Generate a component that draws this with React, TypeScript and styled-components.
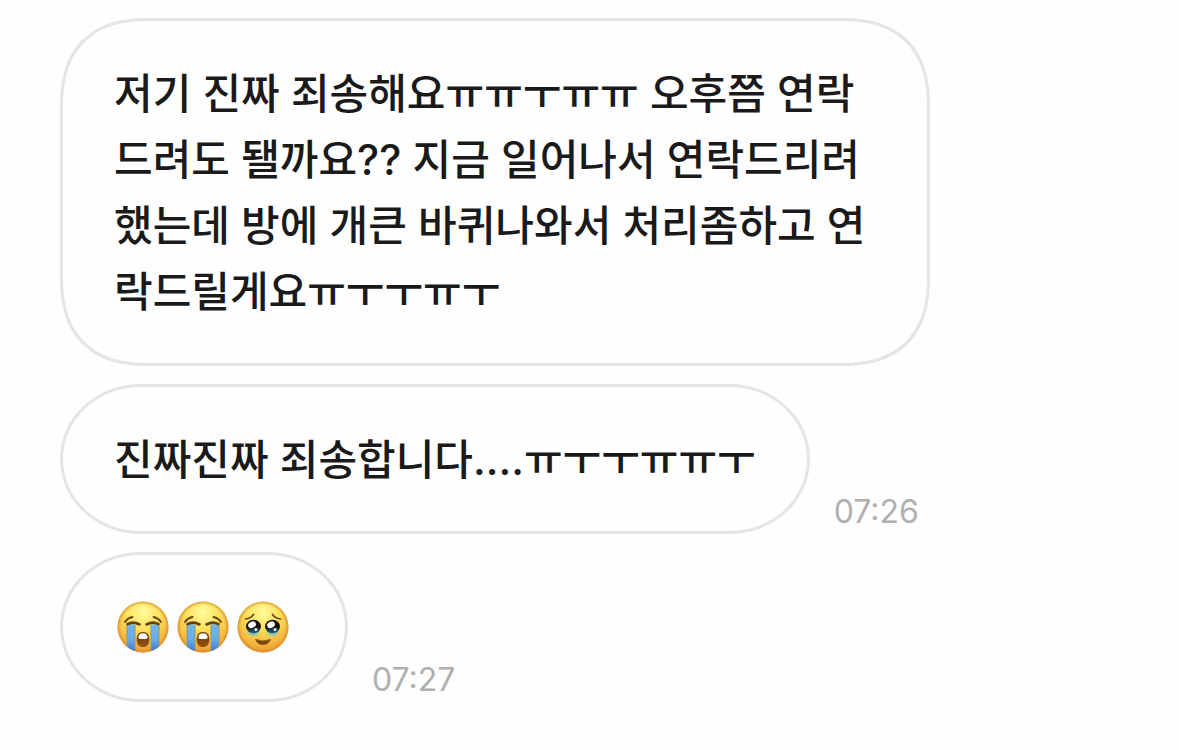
import React from 'react';
import styled, { createGlobalStyle } from 'styled-components';

const GlobalStyle = createGlobalStyle`
  * { box-sizing: border-box; }
  body {
    margin: 0;
    background: #fefefe;
    font-family: Inter, "Noto Sans CJK KR", sans-serif;
    color: #1a1a1a;
  }
`;

const Conversation = styled.main`
  display: flex;
  flex-direction: column;
  gap: 18px;
  padding: 18px 60px 40px;
`;

const MessageRow = styled.article`
  display: flex;
  align-items: flex-end;
  gap: 24px;
`;

const Bubble = styled.div<{ $tall?: boolean }>`
  max-width: 870px;
  padding: 40px 51px 38px;
  border: 3px solid #e5e5e5;
  border-radius: ${({ $tall }) => ($tall ? '90px' : '80px / 75px')};
  corner-shape: ${({ $tall }) => ($tall ? 'superellipse(1.3)' : 'round')};
  background: #fefefe;
`;

const MessageText = styled.p`
  margin: 0;
  font-size: 42px;
  font-weight: 500;
  line-height: 66px;
`;

const Time = styled.time`
  padding-bottom: 2px;
  font-size: 32px;
  line-height: 40px;
  color: #b0b0b0;
`;

const EmojiLine = styled.div`
  display: flex;
  align-items: center;
  gap: 8px;
  height: 66px;
  padding: 0 5px 2px 3px;
`;

const Emoji = styled.svg`
  display: block;
  width: 52px;
  height: 52px;
`;

const SharedDefs = styled.svg`
  display: block;
  width: 0;
  height: 0;
`;

function EmojiDefs() {
  return (
    <SharedDefs aria-hidden="true">
      <defs>
        <radialGradient id="face" cx="50%" cy="22%" r="80%">
          <stop offset="0" stopColor="#fffb9c" />
          <stop offset="0.4" stopColor="#fce25d" />
          <stop offset="0.75" stopColor="#f6b940" />
          <stop offset="1" stopColor="#e99530" />
        </radialGradient>
        <radialGradient id="rim" cx="50%" cy="50%" r="50%">
          <stop offset="0.86" stopColor="#d98a2b" stopOpacity="0" />
          <stop offset="1" stopColor="#d08a2c" stopOpacity="0.75" />
        </radialGradient>
        <linearGradient id="tears" x1="0" y1="0" x2="0" y2="1">
          <stop offset="0" stopColor="#72b5e6" />
          <stop offset="0.55" stopColor="#69abea" />
          <stop offset="1" stopColor="#396fd0" />
        </linearGradient>
        <linearGradient id="mouth" x1="0" y1="0" x2="0" y2="1">
          <stop offset="0" stopColor="#6b3507" />
          <stop offset="1" stopColor="#935410" />
        </linearGradient>
        <linearGradient id="iris" x1="0" y1="0" x2="0" y2="1">
          <stop offset="0.5" stopColor="#160d08" />
          <stop offset="1" stopColor="#215f7b" />
        </linearGradient>
        <radialGradient id="welling">
          <stop offset="0.3" stopColor="#66c3cf" />
          <stop offset="1" stopColor="#7cc4b0" stopOpacity="0" />
        </radialGradient>
        <clipPath id="disc">
          <circle cx="26" cy="26" r="25.5" />
        </clipPath>
      </defs>
    </SharedDefs>
  );
}

function Face() {
  return (
    <>
      <circle cx="26" cy="26" r="25.5" fill="url(#face)" />
      <circle cx="26" cy="26" r="25.5" fill="url(#rim)" />
    </>
  );
}

function CryingFace() {
  return (
    <Emoji viewBox="0 0 52 52" role="img" aria-label="😭">
      <Face />
      <g clipPath="url(#disc)">
        <path d="M10 23Q14 22 18 24V52H10Z" fill="url(#tears)" />
        <path d="M34 24Q38 22 42 23V52H34Z" fill="url(#tears)" />
        <path d="M10 24V47M18 24V52M34 24V52M42 24V47" stroke="#8a9a78" strokeWidth="1" fill="none" />
      </g>
      <g fill="none" stroke="#68400c" strokeLinecap="round">
        <path d="M8 21Q10.500 17 15.500 16M44 21Q41.500 17 36.500 16" strokeWidth="1.800" />
        <path d="M10.500 23.200Q16 20 22.500 23.500M29.500 23.500Q36 20 41.500 23.200" strokeWidth="2.600" />
      </g>
      <path d="M26 31C30.500 31 32.300 34 32.300 38.500C32.300 43.500 30 46 26 46S19.700 43.500 19.700 38.500C19.700 34 21.500 31 26 31Z" fill="url(#mouth)" />
      <path d="M21.300 36.500Q21.800 32.200 26 32.200T30.700 36.500Q30.700 38 26 38T21.300 36.500Z" fill="#fff" />
    </Emoji>
  );
}

function TearyFace() {
  return (
    <Emoji viewBox="0 0 52 52" role="img" aria-label="🥹">
      <Face />
      <ellipse cx="16.500" cy="31.500" rx="7.500" ry="4.500" fill="url(#welling)" />
      <ellipse cx="35.500" cy="31.500" rx="7.500" ry="4.500" fill="url(#welling)" />
      <ellipse cx="16.500" cy="25.500" rx="7.500" ry="6.700" fill="url(#iris)" />
      <ellipse cx="35.500" cy="25.500" rx="7.500" ry="6.700" fill="url(#iris)" />
      <g fill="#fff">
        <ellipse cx="15" cy="23.800" rx="4" ry="3.100" transform="rotate(-25 15 23.800)" />
        <ellipse cx="34" cy="23.800" rx="4" ry="3.100" transform="rotate(-25 34 23.800)" />
        <circle cx="19" cy="28.500" r="1.500" />
        <circle cx="38" cy="28.500" r="1.500" />
      </g>
      <path
        d="M8.500 18Q13.500 17.500 16.500 13.500M43.500 18Q38.500 17.500 35.500 13.500"
        fill="none"
        stroke="#6b430d"
        strokeWidth="1.700"
        strokeLinecap="round"
      />
      <path d="M18.500 38.500Q26 41.500 33.500 38.500Q31.500 43.500 26 43.500T18.500 38.500Z" fill="#7b480d" stroke="#7b480d" strokeWidth="0.800" strokeLinejoin="round" />
    </Emoji>
  );
}

export default function App() {
  return (
    <>
      <GlobalStyle />
      <EmojiDefs />
      <Conversation>
        <MessageRow>
          <Bubble $tall>
            <MessageText lang="ko">
              저기 진짜 죄송해요ㅠㅠㅜㅠㅠ 오후쯤 연락드려도 됄까요?? 지금 일어나서 연락드리려 했는데 방에 개큰 바퀴나와서 처리좀하고 연락드릴게요ㅠㅜㅜㅠㅜ
            </MessageText>
          </Bubble>
        </MessageRow>
        <MessageRow>
          <Bubble>
            <MessageText lang="ko">진짜진짜 죄송합니다....ㅠㅜㅜㅠㅠㅜ</MessageText>
          </Bubble>
          <Time dateTime="07:26">07:26</Time>
        </MessageRow>
        <MessageRow>
          <Bubble>
            <EmojiLine>
              <CryingFace />
              <CryingFace />
              <TearyFace />
            </EmojiLine>
          </Bubble>
          <Time dateTime="07:27">07:27</Time>
        </MessageRow>
      </Conversation>
    </>
  );
}
